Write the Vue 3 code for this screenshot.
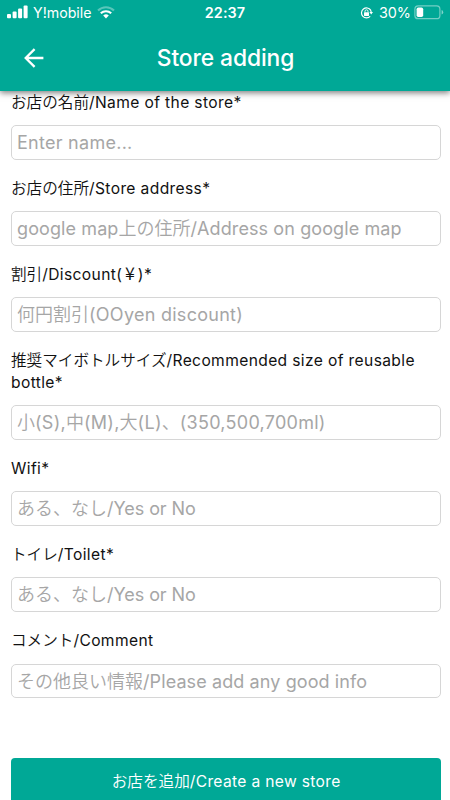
<script setup>
const fields = [
  { id: 'name', label: [['お店の名前', 1], ['/Name of the store*', 0]], hint: [['Enter name...', 3]] },
  { id: 'address', label: [['お店の住所', 1], ['/Store address*', 0]], hint: [['google map', 0], ['上の住所', 1], ['/Address on google map', 0]] },
  { id: 'discount', label: [['割引', 1], ['/Discount(', 0], ['¥', 2], [')*', 0]], hint: [['何円割引', 1], ['(OOyen discount)', 3]] },
  { id: 'size', label: [['推奨マイボトルサイズ', 1], ['/Recommended size of reusable bottle*', 0]], hint: [['小', 1], ['(S),', 3], ['中', 1], ['(M),', 3], ['大', 1], ['(L)', 3], ['、', 1], ['(350,500,700ml)', 3]] },
  { id: 'wifi', label: [['Wifi*', 0]], hint: [['ある、なし', 1], ['/Yes or No', 4]] },
  { id: 'toilet', label: [['トイレ', 1], ['/Toilet*', 0]], hint: [['ある、なし', 1], ['/Yes or No', 4]] },
  { id: 'comment', label: [['コメント', 1], ['/Comment', 0]], hint: [['その他良い情報', 1], ['/Please add any good info', 0]] },
]
const kind = ['latin', 'jp', 'yen', 'latin wide', 'latin tight']
</script>

<template>
  <div class="screen">
    <header class="header">
      <div class="status">
        <div class="carrier">
          <svg class="signal" width="21" height="14" viewBox="0 0 21 14" fill="#fff">
            <rect x="0" y="9" width="4" height="4.2" rx="1" />
            <rect x="5.6" y="6.6" width="4" height="6.6" rx="1" />
            <rect x="11.1" y="3.6" width="4" height="9.6" rx="1" />
            <rect x="16.6" y="0.6" width="4" height="12.6" rx="1" />
          </svg>
          <span class="operator">Y!mobile</span>
          <svg class="wifi" width="18" height="13" viewBox="0 0 18 13" fill="none" stroke="#fff" stroke-width="2.1">
            <path d="M1 4.4 C5.5 .1 12.5 .1 17 4.4" opacity=".35" />
            <path d="M3.8 7.3 C6.8 4.5 11.2 4.5 14.2 7.3" />
            <path d="M6.2 9.5 Q9 7.2 11.8 9.5 L9 12.4Z" fill="#fff" stroke="none" />
          </svg>
        </div>
        <span class="clock">22:37</span>
        <div class="power">
          <svg class="lock" width="13" height="12" viewBox="0 0 13 12" fill="none" stroke="#fff" stroke-width="1.2">
            <path d="M10.7 3.2 A5 5 0 1 0 10.2 9.3" />
            <path d="M10.5 3 Q11.2 4.3 11.2 5.5" />
            <path d="M9.4 5.1 h3.6 L11.2 7.6Z" fill="#fff" stroke="none" />
            <rect x="4" y="5.3" width="5" height="3.7" rx=".4" fill="#fff" stroke="none" />
            <path d="M5 5.5 V4.3 a1.5 1.5 0 0 1 3 0 V5.5" stroke-width=".9" />
          </svg>
          <span class="percent">30%</span>
          <svg class="battery" width="30" height="15" viewBox="0 0 30 15">
            <rect x=".9" y=".9" width="25" height="12.8" rx="3.3" fill="none" stroke="#fff" stroke-width="1.2" opacity=".45" />
            <rect x="2.6" y="2.6" width="6.6" height="9.4" rx="1.7" fill="#fff" />
            <path d="M27.6 5 Q29.2 5.6 29.2 7.3 Q29.2 9 27.6 9.6Z" fill="#fff" opacity=".5" />
          </svg>
        </div>
      </div>
      <div class="toolbar">
        <svg class="back" width="20" height="20" viewBox="0 0 20 20" fill="none" stroke="#fff" stroke-width="2.3">
          <path d="M19.4 10 H2.3 M10.6 1.1 L1.7 10 L10.6 18.9" />
        </svg>
        <h1>Store adding</h1>
      </div>
    </header>

    <main class="form">
      <div v-for="f in fields" :key="f.id" class="field">
        <div class="label"><span v-for="(s, i) in f.label" :key="i" :class="kind[s[1]]">{{ s[0] }}</span></div>
        <div class="input"><span v-for="(s, i) in f.hint" :key="i" :class="kind[s[1]]">{{ s[0] }}</span></div>
      </div>
      <button class="submit"><span class="jp">お店を追加</span><span class="latin">/Create a new store</span></button>
    </main>
  </div>
</template>

<style>
body {
  margin: 0;
  background: #fff;
}
</style>

<style scoped>
.screen {
  height: 800px;
  display: flex;
  flex-direction: column;
  overflow: hidden;
  background: #fff;
  color: #111;
  font-family: Inter, "Noto Sans CJK JP", sans-serif;
}
.header {
  flex: 0 0 91px;
  z-index: 1;
  background: #00a896;
  color: #fff;
  box-shadow: 0 2px 6px rgba(0, 0, 0, 0.5);
}
.status {
  height: 25px;
  display: grid;
  grid-template-columns: 1fr auto 1fr;
  align-items: center;
  padding: 0 7px;
}
.carrier,
.power {
  display: flex;
  align-items: center;
}
.power {
  justify-content: flex-end;
}
.signal {
  margin-top: -2px;
}
.operator {
  margin-left: 5px;
  font-size: 14.2px;
  font-weight: 380;
  line-height: 25px;
}
.wifi {
  margin-left: 6px;
}
.clock {
  font-size: 14.4px;
  font-weight: 600;
  letter-spacing: 0.1px;
}
.percent {
  margin-left: 6px;
  font-size: 14.4px;
  font-weight: 380;
}
.battery {
  margin: -1px -1px 0 3px;
}
.toolbar {
  height: 66px;
  display: grid;
  grid-template-columns: 60px 1fr 60px;
  align-items: center;
}
.back {
  margin-left: 24px;
}
h1 {
  margin: 0;
  padding-left: 1px;
  text-align: center;
  font-size: 22.8px;
  font-weight: 500;
  line-height: 28px;
  letter-spacing: -0.1px;
}
.form {
  flex: none;
  display: flex;
  flex-direction: column;
  padding: 0.8px 8.6px 0 11px;
}
.field {
  display: flex;
  flex-direction: column;
  gap: 11.8px;
  margin-bottom: 18px;
}
.label {
  font-size: 15.6px;
  font-weight: 380;
  line-height: 21.7px;
}
.label .latin {
  letter-spacing: 0.37px;
}
.submit .latin {
  letter-spacing: 0.33px;
}
.jp,
.yen {
  font-family: "Noto Sans CJK JP", sans-serif;
  font-weight: 350;
  line-height: 1;
}
.yen {
  display: inline-block;
  width: 15.6px;
  text-align: center;
  font-size: 18px;
  line-height: 15px;
}
.input {
  box-sizing: border-box;
  height: 34.6px;
  padding: 0 5px;
  border: 1px solid #d6d6d6;
  border-radius: 5px;
  color: #a6a6a6;
  font-size: 18px;
  line-height: 33px;
  white-space: pre;
}
.input .latin {
  letter-spacing: 0.1px;
}
.input .wide {
  letter-spacing: 0.27px;
}
.input .tight {
  letter-spacing: -0.05px;
}
.submit {
  height: 48px;
  margin-top: 42px;
  padding: 0;
  border: 0;
  border-radius: 4px;
  background: #00a896;
  color: #fff;
  font-family: inherit;
  font-size: 15.6px;
  line-height: 21.6px;
}
</style>
